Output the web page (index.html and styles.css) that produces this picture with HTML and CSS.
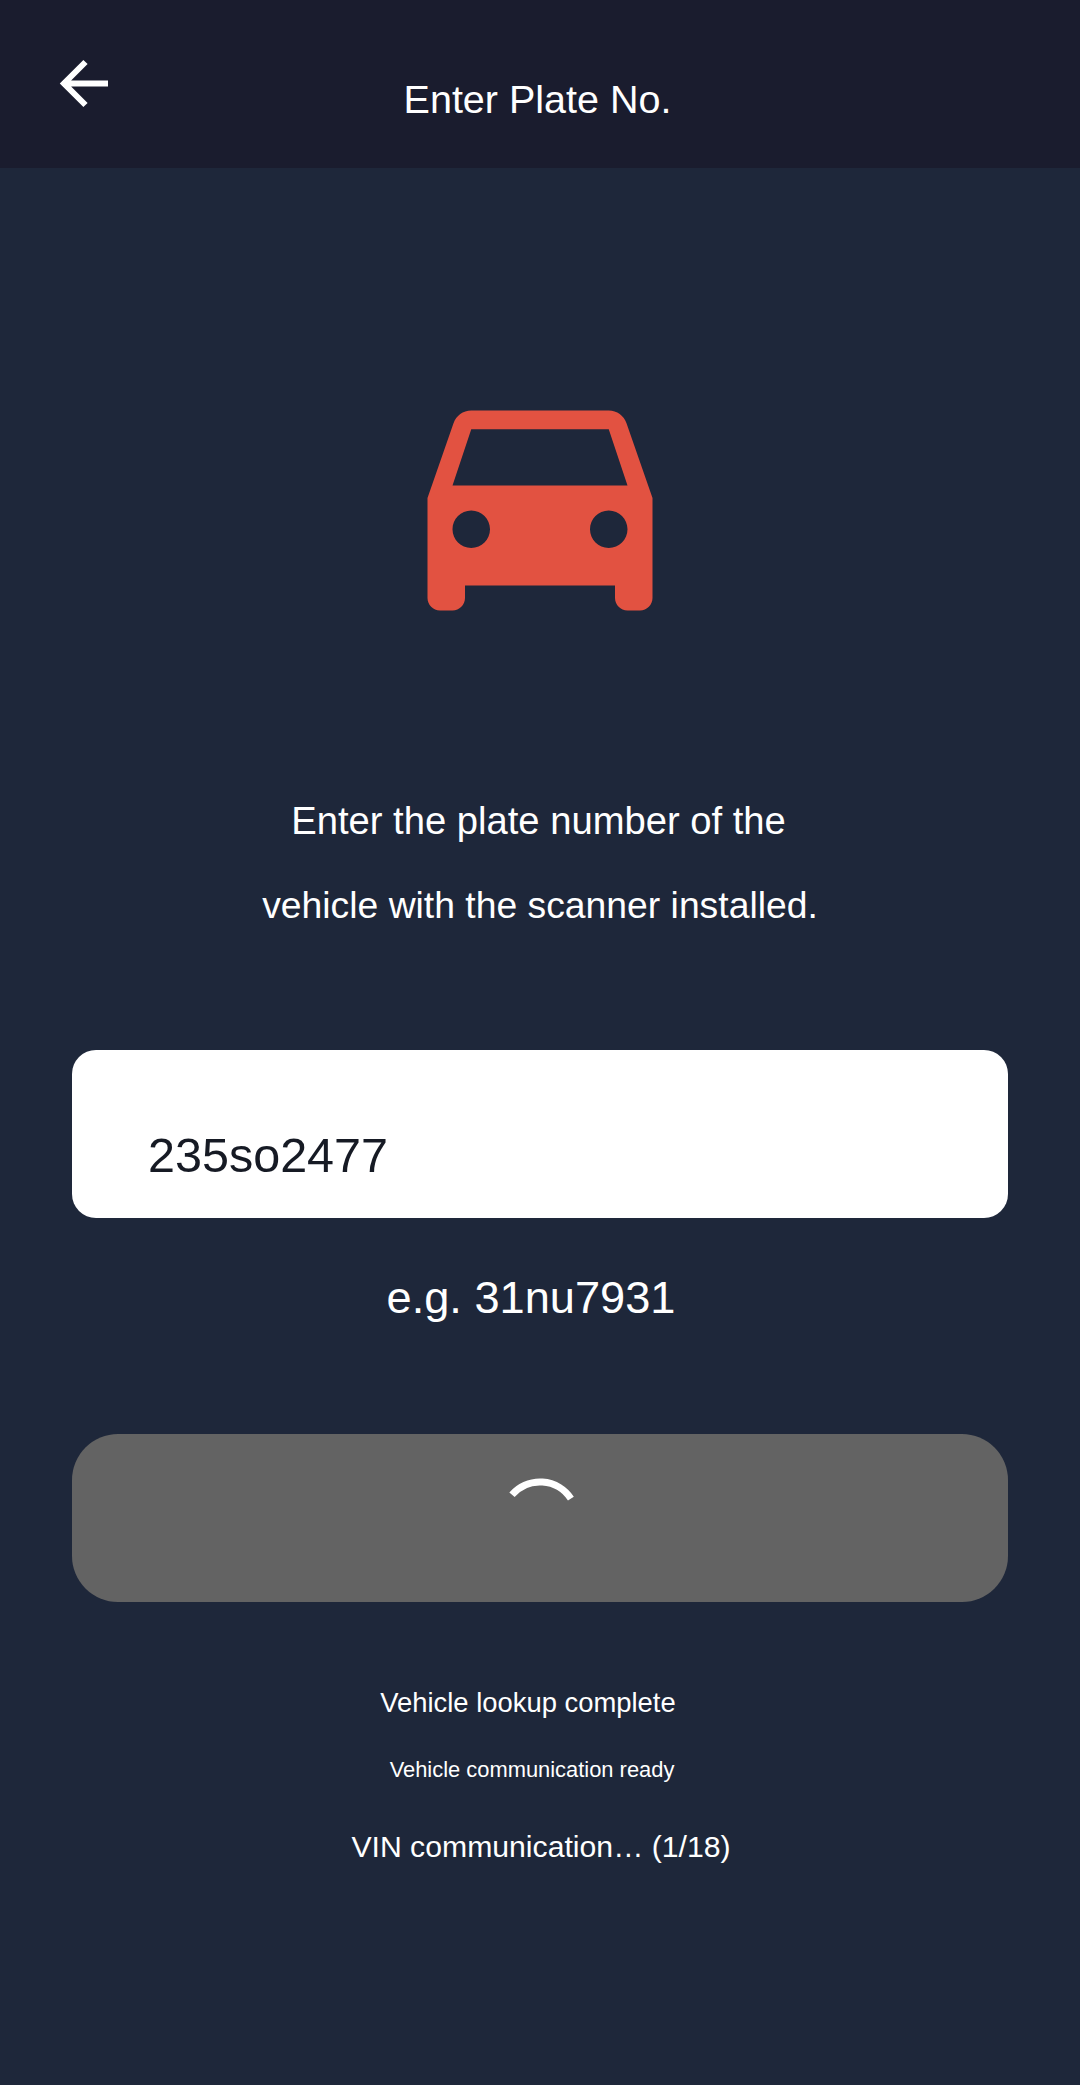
FILE: index.html
```html
<!DOCTYPE html>
<html lang="en">
<head>
    <meta charset="utf-8">
    <meta name="viewport" content="width=device-width, initial-scale=1.0">
    <title>Enter Plate No.</title>
    <link rel="stylesheet" href="styles.css">
</head>
<body>
    <header class="topbar">
        <button class="back" type="button" aria-label="Back">
            <svg width="52" height="52" viewBox="0 0 52 52"><path d="M50 25.500H6M27.500 4L6 25.500 27.500 47" fill="none" stroke="#fff" stroke-width="6"/></svg>
        </button>
        <h1 class="title">Enter Plate No.</h1>
    </header>
    <main class="content">
        <svg class="car" width="300" height="300" viewBox="0 0 24 24"><path fill="#e25241" d="M18.920 6.010C18.720 5.420 18.160 5 17.500 5h-11c-.660 0-1.210.420-1.420 1.010L3 12v8c0 .550.450 1 1 1h1c.550 0 1-.450 1-1v-1h12v1c0 .550.450 1 1 1h1c.550 0 1-.450 1-1v-8l-2.080-5.990zM6.500 16c-.830 0-1.500-.670-1.500-1.500S5.670 13 6.500 13s1.500.670 1.500 1.500S7.330 16 6.500 16zm11 0c-.830 0-1.500-.670-1.500-1.500s.670-1.500 1.500-1.500 1.500.670 1.500 1.500-.670 1.500-1.500 1.500zM5 11l1.500-4.500h11L19 11H5z"/></svg>
        <p class="intro">
            <span class="intro-first">Enter the plate number of the</span>
            <span class="intro-second">vehicle with the scanner installed.</span>
        </p>
        <div class="plate">235so2477</div>
        <p class="hint">e.g. 31nu7931</p>
        <button class="submit" type="button" aria-label="Loading">
            <svg width="84" height="84" viewBox="0 0 84 84"><path d="M14 17.800A37 37 0 0 1 72.900 21.700" fill="none" stroke="#fff" stroke-width="7"/></svg>
        </button>
        <ul class="status">
            <li class="status-lookup">Vehicle lookup complete</li>
            <li class="status-ready">Vehicle communication ready</li>
            <li class="status-vin">VIN communication… (1/18)</li>
        </ul>
    </main>
</body>
</html>
```

FILE: styles.css
```css
* {
    box-sizing: border-box;
}
body {
    margin: 0;
    min-height: 2085px;
    background-color: #1e273a;
    color: #fff;
    font-family: "Liberation Sans", Arial, sans-serif;
}
button {
    border: 0;
    padding: 0;
    background: none;
}
.topbar {
    position: relative;
    height: 168px;
    padding: 56px 5px 0 0;
    background-color: #1a1c2e;
    text-align: center;
}
.back {
    position: absolute;
    left: 58px;
    top: 58px;
    display: block;
    height: 52px;
}
.title {
    margin: 0;
    font-size: 39.5px;
    font-weight: normal;
    line-height: 86px;
}
.content {
    display: flex;
    flex-direction: column;
    align-items: center;
    padding: 180px 72px 0;
}
.car {
    display: block;
}
.intro {
    margin: 130px 0 0;
    line-height: 85px;
    text-align: center;
}
.intro-first {
    display: block;
    padding-right: 3px;
    font-size: 38.2px;
}
.intro-second {
    display: block;
    font-size: 37.3px;
}
.plate {
    width: 100%;
    height: 168px;
    margin-top: 102px;
    padding: 78px 76px 0;
    border-radius: 24px;
    background-color: #fff;
    color: #161a24;
    font-size: 48.5px;
    line-height: 55px;
}
.hint {
    margin: 53px 18px 0 0;
    font-size: 45.2px;
    line-height: 53px;
}
.submit {
    display: flex;
    align-items: center;
    justify-content: center;
    width: 100%;
    height: 168px;
    margin-top: 110px;
    padding-top: 2px;
    border-radius: 46px;
    background-color: #636363;
}
.status {
    margin: 83px 0 0;
    padding: 0;
    list-style: none;
    text-align: center;
}
.status-lookup {
    padding-right: 24px;
    font-size: 27.4px;
    line-height: 36px;
}
.status-ready {
    margin-top: 34px;
    padding-right: 16px;
    font-size: 21.9px;
    line-height: 30px;
}
.status-vin {
    margin-top: 42px;
    padding-left: 2px;
    font-size: 30.2px;
    line-height: 40px;
}
```
